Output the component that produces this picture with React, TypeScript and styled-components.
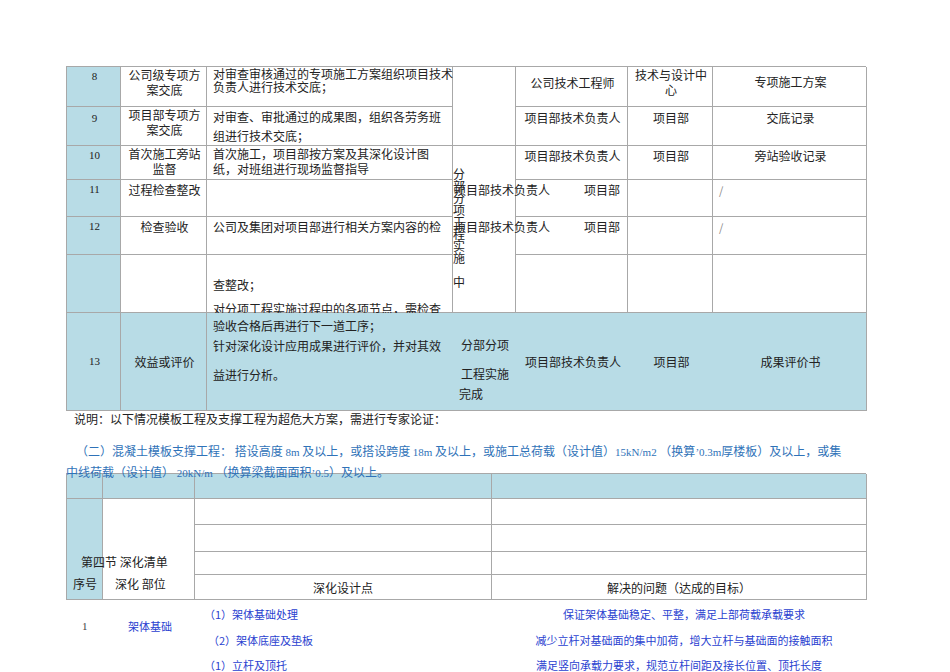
import React from 'react'
import styled, { createGlobalStyle } from 'styled-components'

const Global = createGlobalStyle`
  body {
    margin: 0;
    background: #fff;
    font-family: "Noto Sans CJK SC", "Liberation Sans", sans-serif;
    color: #222;
  }
`

const Page = styled.div`
  width: 950px;
  height: 672px;
  overflow: hidden;
  padding: 66px 0 0 66px;
  box-sizing: border-box;
`

const Table = styled.div`
  width: 800px;
  display: grid;
  grid-template-columns: 54px 86px 246px 63px 112px 85px 154px;
  grid-template-rows: 40px 39px 34px 37px 38px 58px 98px;
  border-top: 1px solid #a8a8a8;
  border-left: 1px solid #a8a8a8;
  box-sizing: border-box;
`

const Cell = styled.div<{ $r: string; $c: string; $blue?: boolean; $align?: string; $pt?: number }>`
  grid-row: ${(p) => p.$r};
  grid-column: ${(p) => p.$c};
  border-right: 1px solid #a8a8a8;
  border-bottom: 1px solid #a8a8a8;
  background: ${(p) => (p.$blue ? '#b8dce6' : '#fff')};
  font-size: 12px;
  line-height: 15px;
  text-align: ${(p) => p.$align || 'center'};
  padding: ${(p) => p.$pt ?? 2}px 4px 0 6px;
  box-sizing: border-box;
  overflow: visible;
  white-space: nowrap;
  position: relative;
`

const Num = styled.span`
  font-family: "Liberation Serif", serif;
  font-size: 11px;
  display: block;
`

const Lines = styled.div<{ $lh?: number }>`
  display: flex;
  flex-direction: column;
  line-height: ${(p) => p.$lh ?? 15}px;
`

const Vertical = styled.div`
  width: 12px;
  font-size: 12px;
  line-height: 12px;
  white-space: normal;
  word-break: break-all;
  margin: 20px 0 0 -6px;
  text-align: left;
`

const Overflow = styled.div`
  position: absolute;
  left: -62px;
  top: 2px;
  display: flex;
  gap: 34px;
  font-size: 12px;
  z-index: 1;
`

const Slash = styled.span`
  color: #888;
  font-size: 11px;
`

const Note = styled.div`
  font-size: 12px;
  margin: 0 0 0 8px;
  line-height: 16px;
  height: 30px;
`

const BluePara = styled.div`
  color: #2f72b8;
  font-size: 12px;
  line-height: 20px;
  margin-left: 10px;
  width: 800px;
  height: 32px;
  position: relative;
  z-index: 1;
`

const Mono = styled.span`
  font-family: "Liberation Serif", serif;
  font-size: 11px;
`

const Table2 = styled.div`
  width: 800px;
  display: grid;
  grid-template-columns: 36px 92px 297px 375px;
  grid-template-rows: 25px 26px 27px 23px 25px;
  border-top: 1px solid #a8a8a8;
  border-left: 1px solid #a8a8a8;
  box-sizing: border-box;
`

const C2 = styled.div<{ $r: string; $c: string; $blue?: boolean }>`
  grid-row: ${(p) => p.$r};
  grid-column: ${(p) => p.$c};
  border-right: 1px solid #a8a8a8;
  border-bottom: 1px solid #a8a8a8;
  background: ${(p) => (p.$blue ? '#b8dce6' : '#fff')};
  font-size: 12px;
  text-align: center;
  padding-top: 4px;
  box-sizing: border-box;
  white-space: nowrap;
  position: relative;
`

const SideLabels = styled.div`
  position: absolute;
  left: 10px;
  bottom: 4px;
  font-size: 12px;
  line-height: 22px;
  text-align: left;
  z-index: 1;
`

const Labels = styled.div`
  display: flex;
  gap: 18px;
  margin-left: -4px;
`

const ListGrid = styled.div`
  display: grid;
  grid-template-columns: 62px 76px 360px 300px;
  grid-template-rows: 27px 25px 25px;
  font-size: 11px;
  color: #2a3fd0;
  align-items: center;
`

const ListCell = styled.div<{ $c: string; $r: string; $ml?: number; $center?: boolean }>`
  grid-column: ${(p) => p.$c};
  grid-row: ${(p) => p.$r};
  margin-left: ${(p) => p.$ml ?? 0}px;
  text-align: ${(p) => (p.$center ? 'center' : 'left')};
  white-space: nowrap;
`

const Index = styled(ListCell)`
  color: #444;
  font-family: "Liberation Serif", serif;
`

export default function App() {
  return (
    <Page>
      <Global />
      <Table>
        <Cell $r="1" $c="1" $blue><Num>8</Num></Cell>
        <Cell $r="1" $c="2" $pt={0}><Lines>公司级专项方<span>案交底</span></Lines></Cell>
        <Cell $r="1" $c="3" $align="left" $pt={0}><Lines $lh={13}>对审查审核通过的专项施工方案组织项目技术<span>负责人进行技术交底；</span></Lines></Cell>
        <Cell $r="1 / 3" $c="4" />
        <Cell $r="1" $c="5" $pt={8}>公司技术工程师</Cell>
        <Cell $r="1" $c="6" $pt={0}><Lines>技术与设计中<span>心</span></Lines></Cell>
        <Cell $r="1" $c="7" $pt={7}>专项施工方案</Cell>

        <Cell $r="2" $c="1" $blue $pt={4}><Num>9</Num></Cell>
        <Cell $r="2" $c="2" $pt={0}><Lines>项目部专项方<span>案交底</span></Lines></Cell>
        <Cell $r="2" $c="3" $align="left" $pt={0}><Lines $lh={19}>对审查、审批通过的成果图，组织各劳务班<span>组进行技术交底；</span></Lines></Cell>
        <Cell $r="2" $c="5" $pt={3}>项目部技术负责人</Cell>
        <Cell $r="2" $c="6" $pt={3}>项目部</Cell>
        <Cell $r="2" $c="7" $pt={3}>交底记录</Cell>

        <Cell $r="3" $c="1" $blue><Num>10</Num></Cell>
        <Cell $r="3" $c="2" $pt={0}><Lines>首次施工旁站<span>监督</span></Lines></Cell>
        <Cell $r="3" $c="3" $align="left" $pt={0}><Lines>首次施工，项目部按方案及其深化设计图<span>纸，对班组进行现场监督指导</span></Lines></Cell>
        <Cell $r="3 / 7" $c="4" $align="left"><Vertical>分部分项工程实施<br /><br />中</Vertical></Cell>
        <Cell $r="3" $c="5">项目部技术负责人</Cell>
        <Cell $r="3" $c="6">项目部</Cell>
        <Cell $r="3" $c="7">旁站验收记录</Cell>

        <Cell $r="4" $c="1" $blue><Num>11</Num></Cell>
        <Cell $r="4" $c="2">过程检查整改</Cell>
        <Cell $r="4" $c="3" />
        <Cell $r="4" $c="5"><Overflow><span>项目部技术负责人</span><span>项目部</span></Overflow></Cell>
        <Cell $r="4" $c="6" />
        <Cell $r="4" $c="7" $align="left"><Slash>/</Slash></Cell>

        <Cell $r="5" $c="1" $blue><Num>12</Num></Cell>
        <Cell $r="5" $c="2">检查验收</Cell>
        <Cell $r="5" $c="3" $align="left">公司及集团对项目部进行相关方案内容的检</Cell>
        <Cell $r="5" $c="5"><Overflow><span>项目部技术负责人</span><span>项目部</span></Overflow></Cell>
        <Cell $r="5" $c="6" />
        <Cell $r="5" $c="7" $align="left"><Slash>/</Slash></Cell>

        <Cell $r="6" $c="1" $blue />
        <Cell $r="6" $c="2" />
        <Cell $r="6" $c="3" $align="left" $pt={18}><Lines $lh={24}>查整改；<span>对分项工程实施过程中的各项节点，需检查</span></Lines></Cell>
        <Cell $r="6" $c="5" />
        <Cell $r="6" $c="6" />
        <Cell $r="6" $c="7" />

        <Cell $r="7" $c="1" $blue $pt={41}><Num>13</Num></Cell>
        <Cell $r="7" $c="2" $blue $pt={41}>效益或评价</Cell>
        <Cell $r="7" $c="3" $blue $align="left" style={{ borderRight: 'none' }} $pt={3}>
          <Lines $lh={20}>验收合格后再进行下一道工序；<span>针对深化设计应用成果进行评价，并对其效</span><span style={{ marginTop: 9 }}>益进行分析。</span></Lines>
        </Cell>
        <Cell $r="7" $c="4" $blue $align="left" style={{ borderRight: 'none' }} $pt={22}>
          <Lines $lh={20}><span style={{ marginLeft: 2 }}>分部分项</span><span style={{ marginTop: 9, marginLeft: 2 }}>工程实施</span><span>完成</span></Lines>
        </Cell>
        <Cell $r="7" $c="5" $blue style={{ borderRight: 'none' }} $pt={41}>项目部技术负责人</Cell>
        <Cell $r="7" $c="6" $blue style={{ borderRight: 'none' }} $pt={41}>项目部</Cell>
        <Cell $r="7" $c="7" $blue $pt={41}>成果评价书</Cell>
      </Table>

      <Note>说明：以下情况模板工程及支撑工程为超危大方案，需进行专家论证：</Note>
      <BluePara>
        （二）混凝土模板支撑工程： 搭设高度 <Mono>8m</Mono> 及以上，或搭设跨度 <Mono>18m</Mono> 及以上，或施工总荷载（设计值）<Mono>15kN/m2</Mono> （换算<Mono>’0.3m</Mono>厚楼板）及以上，或集
        <span style={{ display: 'block', marginLeft: -10 }}>中线荷载（设计值） <Mono>20kN/m</Mono> （换算梁截面面积<Mono>’0.5</Mono>）及以上。</span>
      </BluePara>

      <Table2>
        <C2 $r="1" $c="1" $blue />
        <C2 $r="1" $c="2" $blue />
        <C2 $r="1" $c="3" $blue />
        <C2 $r="1" $c="4" $blue />
        <C2 $r="2 / 6" $c="1" $blue>
          <SideLabels>
            <div style={{ marginLeft: 4 }}>第四节 深化清单</div>
            <Labels><span>序号</span><span>深化 部位</span></Labels>
          </SideLabels>
        </C2>
        <C2 $r="2 / 6" $c="2" />
        <C2 $r="2" $c="3" />
        <C2 $r="2" $c="4" />
        <C2 $r="3" $c="3" />
        <C2 $r="3" $c="4" />
        <C2 $r="4" $c="3" />
        <C2 $r="4" $c="4" />
        <C2 $r="5" $c="3">深化设计点</C2>
        <C2 $r="5" $c="4">解决的问题（达成的目标）</C2>
      </Table2>

      <ListGrid>
        <Index $c="1" $r="1 / 3" $ml={16}>1</Index>
        <ListCell $c="2" $r="1 / 3">架体基础</ListCell>
        <ListCell $c="3" $r="1">（1）架体基础处理</ListCell>
        <ListCell $c="4" $r="1" $ml={-60} $center>保证架体基础稳定、平整，满足上部荷载承载要求</ListCell>
        <ListCell $c="3" $r="2" $ml={4}>（2）架体底座及垫板</ListCell>
        <ListCell $c="4" $r="2" $ml={-60} $center>减少立杆对基础面的集中加荷，增大立杆与基础面的接触面积</ListCell>
        <ListCell $c="3" $r="3">（1）立杆及顶托</ListCell>
        <ListCell $c="4" $r="3" $ml={-70} $center>满足竖向承载力要求，规范立杆间距及接长位置、顶托长度</ListCell>
      </ListGrid>
    </Page>
  )
}
